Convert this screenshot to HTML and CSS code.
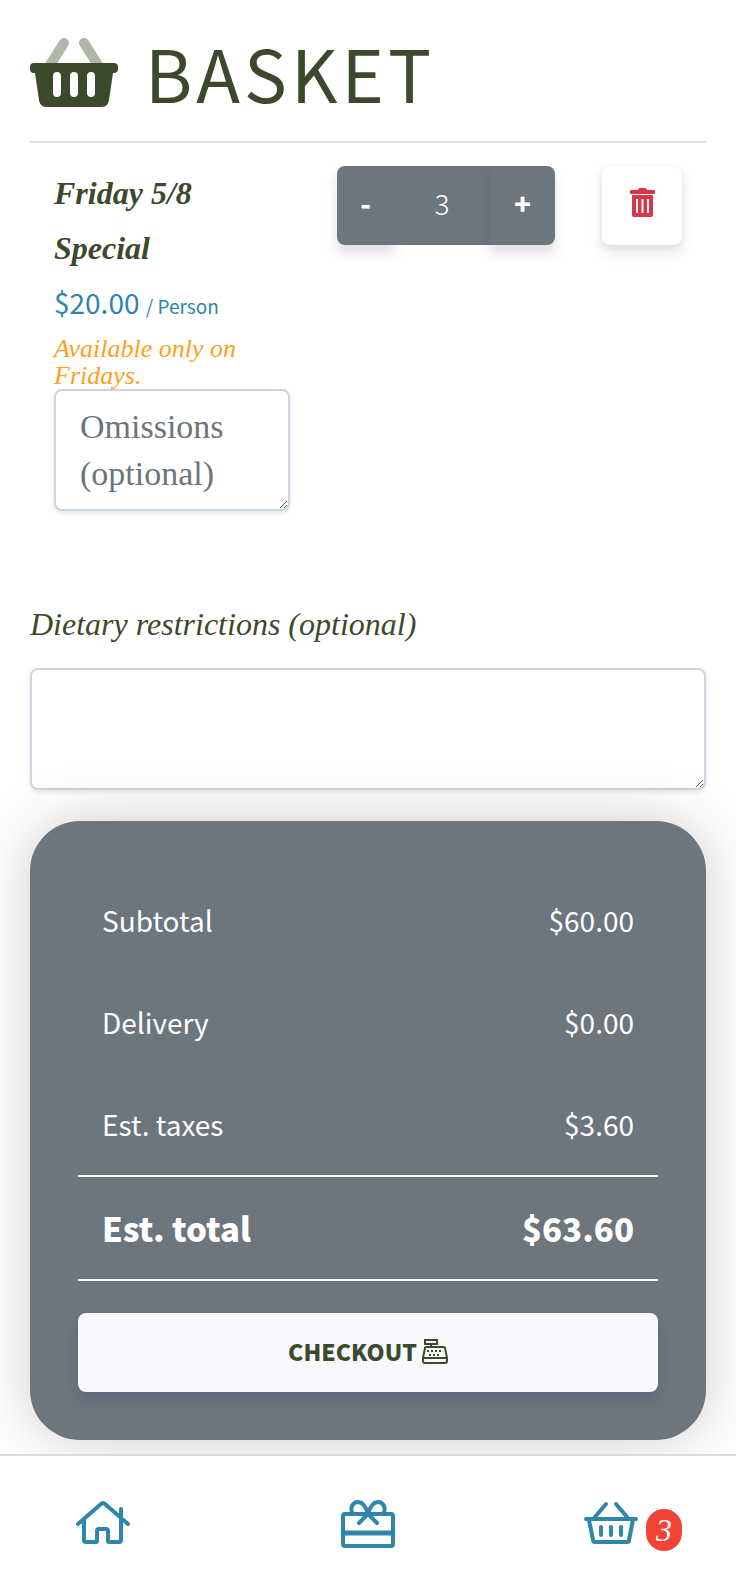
FILE: index.html
```html
<!DOCTYPE html>
<html lang="en">
<head>
<meta charset="utf-8">
<meta name="viewport" content="width=device-width, initial-scale=1.0">
<title>Basket</title>
<link rel="stylesheet" href="styles.css">
</head>
<body>

<main class="container">
  <header class="page-header">
    <svg class="basket-icon" viewBox="0 0 88 69" aria-hidden="true">
      <path d="M20 27 34 5M68 27 54 5" fill="none" stroke="#b1b6aa" stroke-width="10" stroke-linecap="round"/>
      <path fill="#3d492d" fill-rule="evenodd" d="M4 25h80q4 0 4 4v2q0 4-4 4h-1l-4 27q-1 7-7 7H16q-6 0-7-7L5 35H4q-4 0-4-4v-2q0-4 4-4zM27 34q-4 0-4 4v17q0 4 4 4t4-4V38q0-4-4-4zm17 0q-4 0-4 4v17q0 4 4 4t4-4V38q0-4-4-4zm17 0q-4 0-4 4v17q0 4 4 4t4-4V38q0-4-4-4z"/>
    </svg>
    <h1>BASKET</h1>
  </header>

  <form id="basket">
    <section class="item">
      <div class="item-info">
        <h2>Friday 5/8 Special</h2>
        <p class="price">$20.00 <small>/ Person</small></p>
        <p class="note">Available only on Fridays.</p>
        <textarea class="field" name="omissions" aria-label="Omissions" placeholder="Omissions (optional)"></textarea>
      </div>
      <div class="quantity">
        <button class="qty-button" type="button" aria-label="Remove one">-</button>
        <input class="qty-input" type="text" name="quantity" value="3" size="1" aria-label="Quantity">
        <button class="qty-button plus" type="button" aria-label="Add one">+</button>
      </div>
      <button class="trash" type="button" aria-label="Delete item">
        <svg width="25" height="30" viewBox="0 0 25 30" aria-hidden="true">
          <path fill="#dc3545" fill-rule="evenodd" d="M9 0h7l1 2h7q1 0 1 1v2q0 1-1 1H1Q0 6 0 5V3q0-1 1-1h7zM2 7h21v20q0 2-2 2H4q-2 0-2-2zM6 11v14h2V11zm5.500 0v14h2V11zm5.500 0v14h2V11z"/>
        </svg>
      </button>
    </section>

    <label class="diet-label" for="diet">Dietary restrictions (optional)</label>
    <textarea class="field" id="diet" name="diet"></textarea>

    <section class="summary">
      <dl>
        <div class="row"><dt>Subtotal</dt><dd>$60.00</dd></div>
        <div class="row"><dt>Delivery</dt><dd>$0.00</dd></div>
        <div class="row"><dt>Est. taxes</dt><dd>$3.60</dd></div>
        <div class="row total"><dt>Est. total</dt><dd>$63.60</dd></div>
      </dl>
      <button class="checkout" type="submit">CHECKOUT
        <svg width="26" height="26" viewBox="0 0 26 26" fill="none" stroke="#3d492d" stroke-width="2" aria-hidden="true">
          <path d="M3 2h12v4H3zM9 6v3"/>
          <path d="M5 9h16q2 0 2 1l2 10v3q0 2-2 2H3q-2 0-2-2v-3L3 10q0-1 2-1zM1 20h24" stroke-linejoin="round"/>
          <path d="M5 13h2m2 0h2m2 0h2m2 0h2M7 17h2m2 0h2m2 0h2"/>
        </svg>
      </button>
    </section>
  </form>
</main>

<nav class="bottom-nav">
  <a class="home" href="#" aria-label="Home">
    <svg width="54" height="48" viewBox="0 0 54 48" aria-hidden="true">
      <path d="M2 24 25 4q2-2 4 0l23 20M8 20v20q0 2 2 2h10q1 0 1-1V31q0-2 2-2h7q2 0 2 2v10q0 1 1 1h10q2 0 2-2V9v11"/>
    </svg>
  </a>
  <a href="#" aria-label="Gift cards">
    <svg width="54" height="48" viewBox="0 0 54 48" aria-hidden="true">
      <path d="M4 14h46q2 0 2 2v28q0 2-2 2H4q-2 0-2-2V16q0-2 2-2zM18 23l9-9 9 9M27 14C25 7 22 2 17 2s-9 6-5 12M27 14C29 7 32 2 37 2s9 6 5 12"/>
      <path d="M4 33h46" stroke-width="5"/>
    </svg>
  </a>
  <a class="cart" href="#basket" aria-label="Basket, 3 items">
    <svg width="54" height="48" viewBox="0 0 54 48" aria-hidden="true">
      <path d="M2 19h50M5 20l4 20q0 2 2 2h32q2 0 2-2l4-20M11 17 22 4M43 17 32 4"/>
      <path d="M17 27v8M27 27v8M37 27v8"/>
    </svg>
    <span class="badge">3</span>
  </a>
</nav>

</body>
</html>
```
FILE: styles.css
```css
* {
  box-sizing: border-box;
}

body {
  margin: 0;
  min-height: 100vh;
  display: flex;
  flex-direction: column;
  background-color: #fff;
  color: #3d492d;
  font-family: "Noto Sans CJK SC", "Open Sans", sans-serif;
  font-size: 28px;
}

h1, h2, p, dl, dd {
  margin: 0;
}

button, input, textarea {
  font-family: inherit;
  border: none;
  border-radius: 8px;
}

button {
  cursor: pointer;
}

.container {
  flex: 1;
  padding: 0 30px 14px;
}

.page-header {
  display: flex;
  align-items: center;
  gap: 27px;
  height: 143px;
  padding-top: 3px;
  border-bottom: 2px solid #dee2e6;
}

.basket-icon {
  width: 88px;
  height: 69px;
}

h1 {
  font-size: 72px;
  font-weight: 400;
  line-height: 88px;
  letter-spacing: 4px;
}

/* Basket item */
.item {
  display: grid;
  grid-template-columns: 1fr auto auto;
  align-items: start;
  gap: 47px;
  padding: 23px 24px 89px;
}

.item h2 {
  font: italic bold 32px/55px "Liberation Serif", serif;
}

.price {
  margin-bottom: 3px;
  color: #2e86ab;
  line-height: 52px;
}

.price small {
  font-size: 19px;
}

.note {
  color: #ff9f1c;
  font: italic 26px/27px "Liberation Serif", serif;
}

.field {
  display: block;
  width: 100%;
  height: 122px;
  padding: 12px 24px;
  overflow: hidden;
  resize: vertical;
  color: #3d492d;
  background-color: transparent;
  border: 2px solid #ced4dc;
  font: 34px/47px "Liberation Serif", serif;
  box-shadow: 0 2px 4px rgba(100, 120, 160, 0.2);
}

.field::placeholder {
  color: #6c757d;
}

.quantity {
  display: flex;
  height: 79px;
}

.qty-button, .qty-input {
  padding: 0 0 6px;
  color: #fff;
  background-color: #6d757d;
  font-size: 28px;
  text-align: center;
}

.qty-button {
  width: 57px;
  font-weight: 900;
  border-radius: 8px 0 0 8px;
  box-shadow: 0 8px 12px rgba(50, 50, 93, 0.15);
}

.qty-button.plus {
  width: 65px;
  border-radius: 0 8px 8px 0;
}

.qty-input {
  width: 96px;
  border-radius: 0;
  font-weight: 300;
}

.trash {
  display: flex;
  justify-content: center;
  width: 80px;
  height: 79px;
  padding: 22px 0;
  background-color: #fff;
  box-shadow: 0 8px 14px rgba(50, 50, 93, 0.11), 0 2px 6px rgba(0, 0, 0, 0.08);
}

.diet-label {
  display: block;
  margin-bottom: 20px;
  font: italic 32px/48px "Liberation Serif", serif;
}

/* Order summary */
.summary {
  margin-top: 31px;
  padding: 48px;
  color: #fff;
  background-color: #6d757d;
  border-radius: 50px;
  box-shadow: 0 0 60px rgba(0, 0, 0, 0.2);
}

.row {
  display: flex;
  justify-content: space-between;
  padding: 0 24px;
  line-height: 102px;
}

.total {
  border-top: 2px solid #fff;
  border-bottom: 2px solid #fff;
  font-size: 33px;
  font-weight: 900;
}

.checkout {
  display: flex;
  justify-content: center;
  align-items: center;
  gap: 5px;
  width: 100%;
  height: 79px;
  margin-top: 32px;
  padding: 0 0 4px;
  color: #3d492d;
  background-color: #f8f9fc;
  font-size: 23px;
  font-weight: 900;
  box-shadow: 0 8px 12px rgba(50, 50, 93, 0.2);
}

/* Bottom navigation */
.bottom-nav {
  position: sticky;
  bottom: 0;
  display: grid;
  grid-template-columns: 1fr auto 1fr;
  align-items: center;
  height: 138px;
  padding: 0 54px;
  background-color: #fff;
  border-top: 2px solid #d5dedd;
}

.bottom-nav a {
  display: flex;
  text-decoration: none;
}

.bottom-nav svg {
  fill: none;
  stroke: #2e86ab;
  stroke-width: 4;
  stroke-linecap: round;
  stroke-linejoin: round;
}

.bottom-nav .home {
  padding-left: 22px;
}

.bottom-nav .cart {
  justify-content: flex-end;
  align-items: center;
  gap: 8px;
}

.badge {
  width: 36px;
  margin-top: 12px;
  color: #fff;
  background-color: #f44336;
  border-radius: 18px;
  font: italic 32px/42px "Liberation Serif", serif;
  text-align: center;
}
```
